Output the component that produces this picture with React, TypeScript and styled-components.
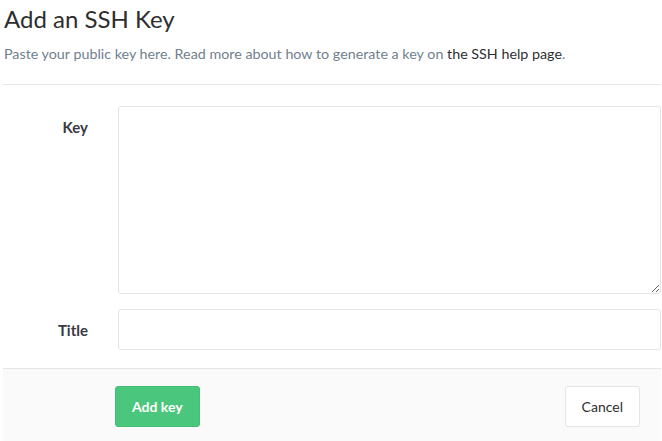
import React from "react";
import styled, { createGlobalStyle } from "styled-components";

const GlobalStyle = createGlobalStyle`
  html, body { margin: 0; padding: 0; background: #fff; }
  body { font-family: Lato, "Noto Sans", sans-serif; color: #2e2e2e; }
  * { box-sizing: border-box; }
`;

const Page = styled.div`
  width: 658px;
  margin-left: 3px;
`;

const Title = styled.h3`
  margin: 0;
  padding-top: 4px;
  font-size: 24px;
  font-weight: 400;
  line-height: 30px;
  color: #2e2e2e;
  padding-left: 1px;
`;

const Lead = styled.p`
  margin: 10px 0 0;
  padding-left: 1px;
  font-size: 14.3px;
  line-height: 20px;
  color: #707f8f;
`;

const Link = styled.a`
  color: #2e2e2e;
  text-decoration: none;
`;

const Divider = styled.hr`
  margin: 20px 0 0;
  border: 0;
  border-top: 1px solid #e7e7e7;
`;

const Form = styled.form`
  display: flex;
  flex-direction: column;
  gap: 15px;
  padding-top: 21px;
`;

const Row = styled.div`
  display: grid;
  grid-template-columns: 85px 1fr;
  column-gap: 30px;
  align-items: start;
`;

const Label = styled.label<{ $top: number }>`
  padding-top: ${(p) => p.$top}px;
  text-align: right;
  font-size: 15px;
  font-weight: 700;
  color: #3a3a42;
  line-height: 20px;
`;

const TextArea = styled.textarea`
  display: block;
  width: 543px;
  height: 188px;
  border: 1px solid #e5e5e5;
  border-radius: 3px;
  resize: vertical;
  font-family: inherit;
  outline: none;
`;

const Input = styled.input`
  display: block;
  width: 543px;
  height: 41px;
  border: 1px solid #e5e5e5;
  border-radius: 3px;
  font-family: inherit;
  outline: none;
`;

const Footer = styled.div`
  margin-top: 18px;
  background: #fafafa;
  border-top: 1px solid #e5e5e5;
  padding: 17px 21px 20px 112px;
  display: flex;
  justify-content: space-between;
  align-items: center;
`;

const Button = styled.button<{ $primary?: boolean }>`
  height: 41px;
  padding: 0 16px;
  border-radius: 3px;
  font-family: inherit;
  font-size: 14px;
  font-weight: ${(p) => (p.$primary ? 700 : 400)};
  color: ${(p) => (p.$primary ? "#fff" : "#2e2e2e")};
  background: ${(p) => (p.$primary ? "#4bc67d" : "#fff")};
  border: 1px solid ${(p) => (p.$primary ? "#44bd75" : "#e5e5e5")};
  cursor: pointer;
`;

export default function App() {
  return (
    <>
      <GlobalStyle />
      <Page>
        <Title>Add an SSH Key</Title>
        <Lead>
          Paste your public key here. Read more about how to generate a key on{" "}
          <Link href="#">the SSH help page</Link>.
        </Lead>
        <Divider />
        <Form onSubmit={(e) => e.preventDefault()}>
          <Row>
            <Label $top={11}>Key</Label>
            <TextArea />
          </Row>
          <Row>
            <Label $top={11}>Title</Label>
            <Input />
          </Row>
        </Form>
        <Footer>
          <Button $primary>Add key</Button>
          <Button>Cancel</Button>
        </Footer>
      </Page>
    </>
  );
}
